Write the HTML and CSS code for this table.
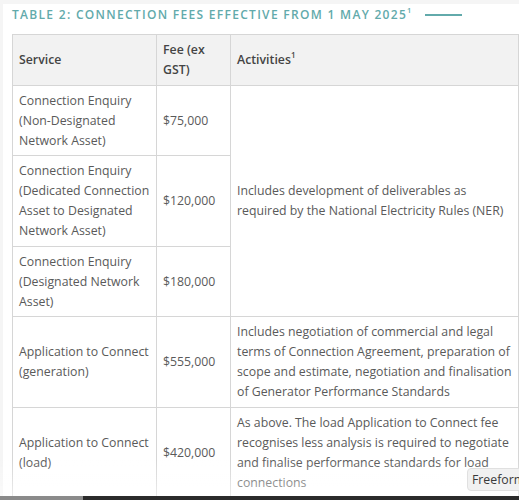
FILE: index.html
```html
<!DOCTYPE html>
<html>
<head>
<meta charset="utf-8">
<link rel="stylesheet" href="styles.css">
</head>
<body>
<div class="page">
  <h2 class="caption"><span>TABLE 2: CONNECTION FEES EFFECTIVE FROM 1 MAY 2025<sup>1</sup></span><span class="rule"></span></h2>
  <table class="fees">
    <colgroup>
      <col class="c1"><col class="c2"><col class="c3">
    </colgroup>
    <thead>
      <tr><th>Service</th><th>Fee (ex GST)</th><th>Activities<sup>1</sup></th></tr>
    </thead>
    <tbody>
      <tr><td>Connection Enquiry (Non-Designated Network Asset)</td><td>$75,000</td><td rowspan="3">Includes development of deliverables as required by the National Electricity Rules (NER)</td></tr>
      <tr><td>Connection Enquiry (Dedicated Connection Asset to Designated Network Asset)</td><td>$120,000</td></tr>
      <tr><td>Connection Enquiry (Designated Network Asset)</td><td>$180,000</td></tr>
      <tr><td>Application to Connect (generation)</td><td>$555,000</td><td>Includes negotiation of commercial and legal terms of Connection Agreement, preparation of scope and estimate, negotiation and finalisation of Generator Performance Standards</td></tr>
      <tr><td>Application to Connect (load)</td><td>$420,000</td><td>As above. The load Application to Connect fee recognises less analysis is required to negotiate and finalise performance standards for load connections</td></tr>
    </tbody>
  </table>
</div>
<div class="fade"></div>
<div class="tooltip">Freeform</div>
<div class="bottombar"><span class="seg"></span></div>
</body>
</html>
```
FILE: styles.css
```css
html, body {
  margin: 0;
  padding: 0;
  background: #fff;
  height: 500px;
  overflow: hidden;
}
body {
  font-family: "Open Sans", "Noto Sans", sans-serif;
  font-size: 12.3px;
  color: #5a5a5a;
  box-shadow: inset 3px 4px 0 #f5f5f5;
}
.page {
  padding: 6px 2px 0 12px;
}
.caption {
  margin: 0 0 10px 0;
  display: flex;
  align-items: center;
  font-size: 12px;
  font-weight: 600;
  letter-spacing: 1.3px;
  color: #62aaab;
  line-height: 18px;
  height: 18px;
}
.caption sup {
  font-size: 7.5px;
  letter-spacing: 0;
  vertical-align: 6px;
  line-height: 0;
}
.rule {
  display: inline-block;
  width: 37px;
  height: 1.5px;
  background: #62aaab;
  margin-left: 14px;
}
.fees {
  border-collapse: collapse;
  table-layout: fixed;
  width: 506px;
}
.c1 { width: 144px; }
.c2 { width: 74px; }
.c3 { width: 288px; }
.fees th, .fees td {
  border: 1px solid #d6d6d6;
  padding: 5px 5px 4.5px 6px;
  line-height: 20px;
  vertical-align: middle;
  text-align: left;
}
.fees th {
  background: #f2f2f2;
  font-weight: 600;
  color: #444;
}
.fees th sup {
  font-size: 8px;
  vertical-align: 6px;
  line-height: 0;
}
.fade {
  position: fixed;
  left: 0;
  right: 0;
  bottom: 4px;
  height: 36px;
  background: linear-gradient(to bottom, rgba(255,255,255,0), rgba(255,255,255,0.5));
}
.tooltip {
  position: fixed;
  left: 467px;
  top: 468px;
  width: 70px;
  height: 23px;
  box-sizing: border-box;
  padding: 2px 0 0 4px;
  background: #f1f1f1;
  border: 1px solid #e0e0e0;
  border-radius: 4px;
  font-size: 12.3px;
  color: #3a3a3a;
  line-height: 18px;
  white-space: nowrap;
  overflow: hidden;
}
.tooltip::after {
  content: "";
  position: absolute;
  left: 30px;
  bottom: -6px;
  border-left: 6px solid transparent;
  border-right: 6px solid transparent;
  border-top: 6px solid #f1f1f1;
}
.bottombar {
  position: fixed;
  left: 0;
  right: 0;
  bottom: 0;
  height: 4px;
  background: #2b2b2b;
  display: flex;
}
.bottombar .seg {
  width: 83px;
  background: #8a8a8a;
}
```
